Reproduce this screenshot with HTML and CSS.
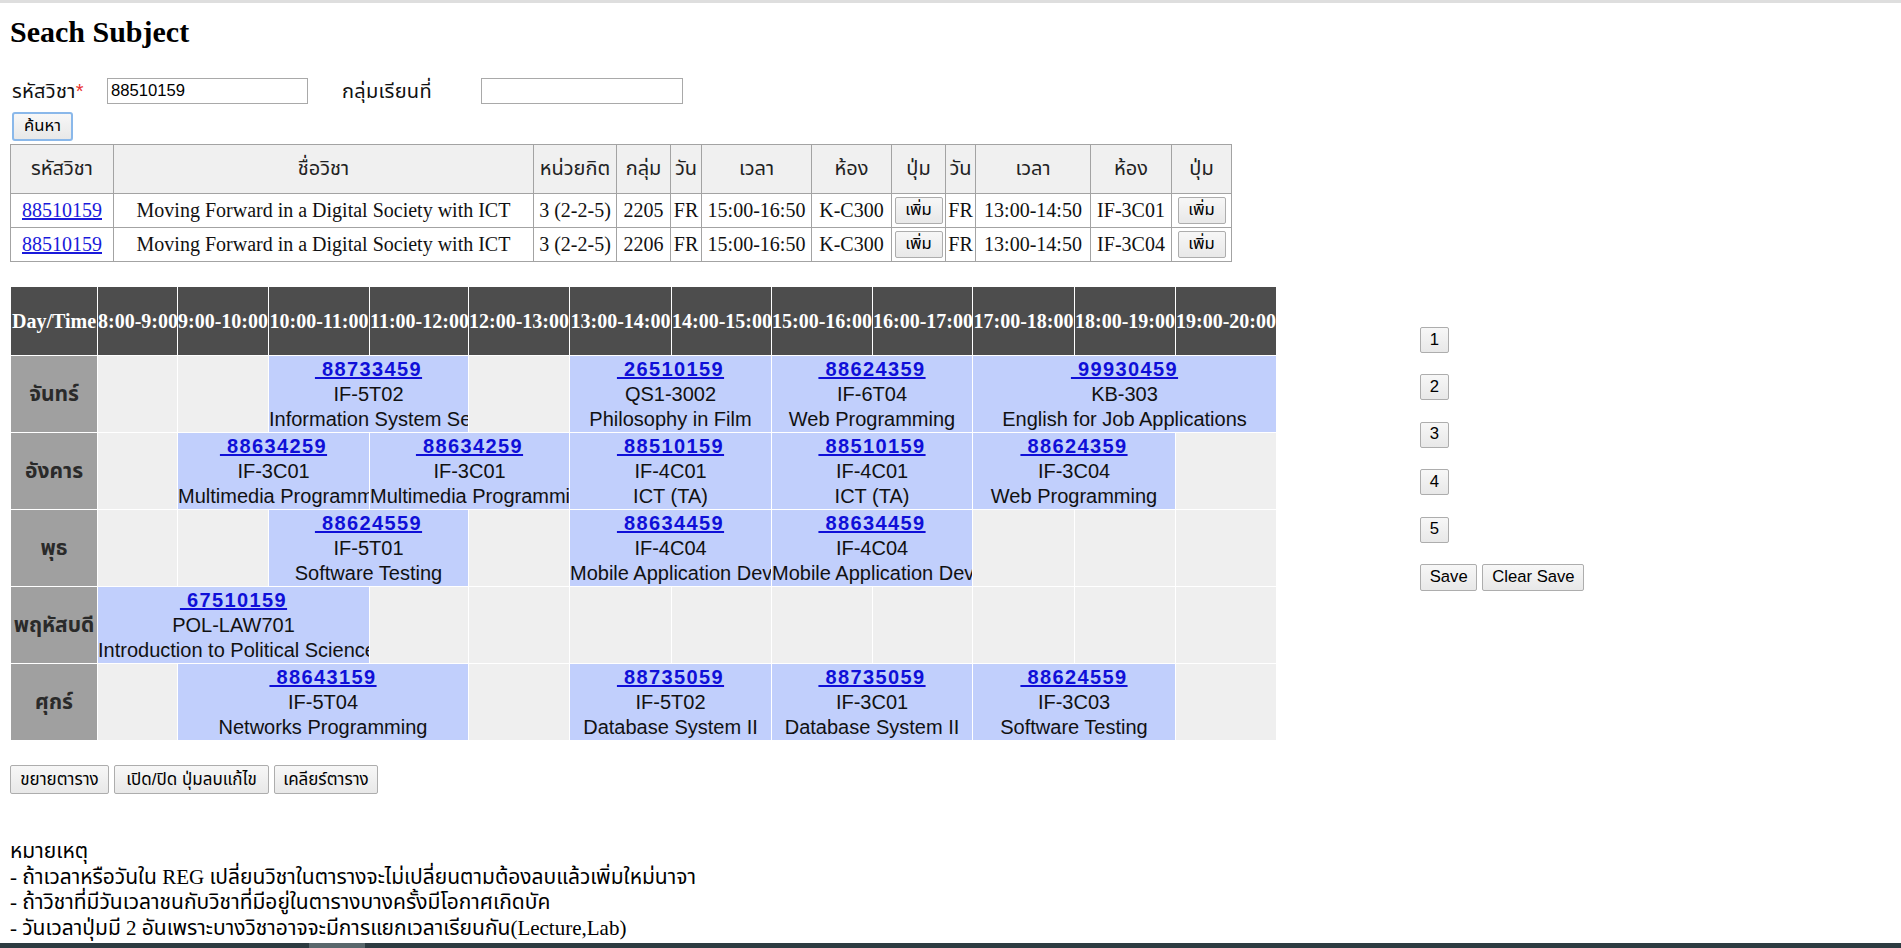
FILE: index.html
```html
<!DOCTYPE html>
<html lang="th">
<head>
<meta charset="utf-8">
<title>Seach Subject</title>
<link rel="stylesheet" href="styles.css">
</head>
<body>
<div class="topline"></div>
<main class="page">
  <h2 class="title">Seach Subject</h2>
  <form class="search">
    <div class="field-row">
      <label class="lbl lbl-code">รหัสวิชา<span class="req">*</span></label>
      <input class="txt" type="text" value="88510159">
      <label class="lbl lbl-group">กลุ่มเรียนที่</label>
      <input class="txt txt-wide" type="text" value="">
    </div>
    <div class="btn-row"><button type="button" class="btn btn-search">ค้นหา</button></div>
  </form>

  <table class="results">
    <colgroup>
      <col><col><col><col><col><col><col><col><col><col><col><col>
    </colgroup>
    <thead>
      <tr>
        <th>รหัสวิชา</th><th>ชื่อวิชา</th><th>หน่วยกิต</th><th>กลุ่ม</th><th>วัน</th><th>เวลา</th><th>ห้อง</th><th>ปุ่ม</th><th>วัน</th><th>เวลา</th><th>ห้อง</th><th>ปุ่ม</th>
      </tr>
    </thead>
    <tbody>
      <tr>
        <td><a href="#">88510159</a></td><td>Moving Forward in a Digital Society with ICT</td><td>3 (2-2-5)</td><td>2205</td><td>FR</td><td>15:00-16:50</td><td>K-C300</td><td><button type="button" class="btn add">เพิ่ม</button></td><td>FR</td><td>13:00-14:50</td><td>IF-3C01</td><td><button type="button" class="btn add">เพิ่ม</button></td>
      </tr>
      <tr>
        <td><a href="#">88510159</a></td><td>Moving Forward in a Digital Society with ICT</td><td>3 (2-2-5)</td><td>2206</td><td>FR</td><td>15:00-16:50</td><td>K-C300</td><td><button type="button" class="btn add">เพิ่ม</button></td><td>FR</td><td>13:00-14:50</td><td>IF-3C04</td><td><button type="button" class="btn add">เพิ่ม</button></td>
      </tr>
    </tbody>
  </table>

  <div class="planner">
    <table class="grid">
      <colgroup>
        <col><col><col><col><col><col><col><col><col><col><col><col><col>
      </colgroup>
      <thead>
        <tr>
          <th>Day/Time</th><th>8:00-9:00</th><th>9:00-10:00</th><th>10:00-11:00</th><th>11:00-12:00</th><th>12:00-13:00</th><th>13:00-14:00</th><th>14:00-15:00</th><th>15:00-16:00</th><th>16:00-17:00</th><th>17:00-18:00</th><th>18:00-19:00</th><th>19:00-20:00</th>
        </tr>
      </thead>
      <tbody>
        <tr>
          <td class="day">จันทร์</td>
          <td class="free"></td><td class="free"></td>
          <td class="slot" colspan="2"><div class="cell"><a href="#">&nbsp;88733459</a><span>IF-5T02</span><span>Information System Security</span></div></td>
          <td class="free"></td>
          <td class="slot" colspan="2"><div class="cell"><a href="#">&nbsp;26510159</a><span>QS1-3002</span><span>Philosophy in Film</span></div></td>
          <td class="slot" colspan="2"><div class="cell"><a href="#">&nbsp;88624359</a><span>IF-6T04</span><span>Web Programming</span></div></td>
          <td class="slot" colspan="3"><div class="cell"><a href="#">&nbsp;99930459</a><span>KB-303</span><span>English for Job Applications</span></div></td>
        </tr>
        <tr>
          <td class="day">อังคาร</td>
          <td class="free"></td>
          <td class="slot" colspan="2"><div class="cell"><a href="#">&nbsp;88634259</a><span>IF-3C01</span><span>Multimedia Programming</span></div></td>
          <td class="slot" colspan="2"><div class="cell"><a href="#">&nbsp;88634259</a><span>IF-3C01</span><span>Multimedia Programming</span></div></td>
          <td class="slot" colspan="2"><div class="cell"><a href="#">&nbsp;88510159</a><span>IF-4C01</span><span>ICT (TA)</span></div></td>
          <td class="slot" colspan="2"><div class="cell"><a href="#">&nbsp;88510159</a><span>IF-4C01</span><span>ICT (TA)</span></div></td>
          <td class="slot" colspan="2"><div class="cell"><a href="#">&nbsp;88624359</a><span>IF-3C04</span><span>Web Programming</span></div></td>
          <td class="free"></td>
        </tr>
        <tr>
          <td class="day">พุธ</td>
          <td class="free"></td><td class="free"></td>
          <td class="slot" colspan="2"><div class="cell"><a href="#">&nbsp;88624559</a><span>IF-5T01</span><span>Software Testing</span></div></td>
          <td class="free"></td>
          <td class="slot" colspan="2"><div class="cell"><a href="#">&nbsp;88634459</a><span>IF-4C04</span><span>Mobile Application Development</span></div></td>
          <td class="slot" colspan="2"><div class="cell"><a href="#">&nbsp;88634459</a><span>IF-4C04</span><span>Mobile Application Development</span></div></td>
          <td class="free"></td><td class="free"></td><td class="free"></td>
        </tr>
        <tr>
          <td class="day">พฤหัสบดี</td>
          <td class="slot" colspan="3"><div class="cell"><a href="#">&nbsp;67510159</a><span>POL-LAW701</span><span>Introduction to Political Science</span></div></td>
          <td class="free"></td><td class="free"></td><td class="free"></td><td class="free"></td><td class="free"></td><td class="free"></td><td class="free"></td><td class="free"></td><td class="free"></td>
        </tr>
        <tr>
          <td class="day">ศุกร์</td>
          <td class="free"></td>
          <td class="slot" colspan="3"><div class="cell"><a href="#">&nbsp;88643159</a><span>IF-5T04</span><span>Networks Programming</span></div></td>
          <td class="free"></td>
          <td class="slot" colspan="2"><div class="cell"><a href="#">&nbsp;88735059</a><span>IF-5T02</span><span>Database System II</span></div></td>
          <td class="slot" colspan="2"><div class="cell"><a href="#">&nbsp;88735059</a><span>IF-3C01</span><span>Database System II</span></div></td>
          <td class="slot" colspan="2"><div class="cell"><a href="#">&nbsp;88624559</a><span>IF-3C03</span><span>Software Testing</span></div></td>
          <td class="free"></td>
        </tr>
      </tbody>
    </table>

    <div class="side">
      <button type="button" class="btn num">1</button>
      <button type="button" class="btn num">2</button>
      <button type="button" class="btn num">3</button>
      <button type="button" class="btn num">4</button>
      <button type="button" class="btn num">5</button>
      <div class="save-row">
        <button type="button" class="btn">Save</button>
        <button type="button" class="btn">Clear Save</button>
      </div>
    </div>
  </div>

  <div class="tools">
    <button type="button" class="btn tool tool-expand">ขยายตาราง</button>
    <button type="button" class="btn tool tool-toggle">เปิด/ปิด ปุ่มลบแก้ไข</button>
    <button type="button" class="btn tool tool-clear">เคลียร์ตาราง</button>
  </div>

  <div class="notes">
    <p>หมายเหตุ</p>
    <p>- ถ้าเวลาหรือวันใน REG เปลี่ยนวิชาในตารางจะไม่เปลี่ยนตามต้องลบแล้วเพิ่มใหม่นาจา</p>
    <p>- ถ้าวิชาที่มีวันเวลาชนกับวิชาที่มีอยู่ในตารางบางครั้งมีโอกาศเกิดบัค</p>
    <p>- วันเวลาปุ่มมี 2 อันเพราะบางวิชาอาจจะมีการแยกเวลาเรียนกัน(Lecture,Lab)</p>
  </div>
</main>
<div class="hscroll"><div class="thumb"></div></div>
</body>
</html>
```
FILE: styles.css
```css
* { box-sizing: border-box; }

html, body {
  margin: 0;
  padding: 0;
  background: #fff;
}

body {
  font-family: "Liberation Serif", "Noto Sans Thai", "Noto Serif Thai", "Tahoma", "Loma", "Garuda", "Norasi", serif;
  font-size: 20px;
  color: #000;
}

.topline {
  height: 3px;
  background: #dedede;
}

.page {
  padding: 0 10px;
}

.title {
  margin: 12px 0 0;
  font: bold 30px/34px "Liberation Serif", serif;
}

/* ---------- search form ---------- */
.search { margin: 0; }

.field-row {
  display: flex;
  align-items: center;
  margin-top: 29px;
  height: 26px;
}

.lbl {
  font: 20px/26px "Liberation Sans", "Noto Sans Thai", "Tahoma", "Loma", "Garuda", sans-serif;
  color: #111;
  white-space: nowrap;
  letter-spacing: 0.3px;
}

.lbl-code { width: 97px; padding-left: 2px; }
.lbl-group { width: 173px; padding-left: 34px; }

.req { color: #e8312f; }

.txt {
  width: 201px;
  height: 26px;
  margin: 0;
  border: 1px solid #a9a9a9;
  padding: 1px 3px;
  font: 16.67px "Liberation Sans", sans-serif;
  color: #000;
  background: #fff;
}

.txt-wide { width: 202px; }

.btn-row { margin-top: 8px; padding-left: 2px; }

.btn {
  margin: 0;
  height: 27px;
  padding: 0 8.75px;
  border: 1px solid #adadad;
  border-radius: 2px;
  background: linear-gradient(#f7f7f7, #e8e8e8);
  font: 16.67px/1 "Liberation Sans", "Noto Sans Thai", "Tahoma", "Loma", "Garuda", sans-serif;
  color: #000;
  white-space: nowrap;
}

.btn-search {
  display: block;
  width: 61px;
  height: 29px;
  padding: 0;
  border: 2px solid #8ab8ea;
  border-radius: 3px;
}

/* ---------- results table ---------- */
.results {
  margin-top: 3px;
  width: 1221px;
  table-layout: fixed;
  border-collapse: collapse;
  border: 1px solid #555;
}

.results col:nth-child(1) { width: 103px; }
.results col:nth-child(2) { width: 420px; }
.results col:nth-child(3) { width: 83px; }
.results col:nth-child(4) { width: 54px; }
.results col:nth-child(5) { width: 31px; }
.results col:nth-child(6) { width: 110px; }
.results col:nth-child(7) { width: 80px; }
.results col:nth-child(8) { width: 54px; }
.results col:nth-child(9) { width: 30px; }
.results col:nth-child(10) { width: 115px; }
.results col:nth-child(11) { width: 81px; }
.results col:nth-child(12) { width: 60px; }

.results th,
.results td {
  border: 1px solid #a3a3a3;
  padding: 0;
  text-align: center;
  white-space: nowrap;
  overflow: hidden;
}

.results th {
  height: 49px;
  background: #f0f0f0;
  font: 20px "Liberation Sans", "Noto Sans Thai", "Tahoma", "Loma", "Garuda", sans-serif;
  color: #222;
}

.results td {
  height: 34px;
  font: 20px "Liberation Serif", serif;
  color: #111;
}

.results a { color: #1a1adb; }

.btn.add {
  width: 48px;
  height: 27px;
  padding: 0;
  vertical-align: middle;
}

/* ---------- timetable grid ---------- */
.planner {
  display: flex;
  align-items: flex-start;
  margin-top: 24px;
}

.grid {
  width: 1266px;
  flex: none;
  table-layout: fixed;
  border-collapse: collapse;
}

.grid col:nth-child(1) { width: 87px; }
.grid col:nth-child(2) { width: 80px; }
.grid col:nth-child(3) { width: 91px; }
.grid col:nth-child(4) { width: 101px; }
.grid col:nth-child(5) { width: 99px; }
.grid col:nth-child(6) { width: 101px; }
.grid col:nth-child(7) { width: 102px; }
.grid col:nth-child(8) { width: 100px; }
.grid col:nth-child(9) { width: 101px; }
.grid col:nth-child(10) { width: 100px; }
.grid col:nth-child(11) { width: 102px; }
.grid col:nth-child(12) { width: 101px; }
.grid col:nth-child(13) { width: 101px; }

.grid th,
.grid td {
  border: 1px solid #fff;
  padding: 0;
}

.grid th {
  height: 69px;
  background: #4d4d4d;
  color: #fff;
  font: bold 20px "Liberation Serif", serif;
  white-space: nowrap;
  text-align: center;
  overflow: hidden;
}

.grid td {
  height: 77px;
}

.grid .free { background: #efefef; }

.grid .day {
  background: #a0a0a0;
  color: #2a2a2a;
  text-align: center;
  font: bold 21px "Liberation Sans", "Noto Sans Thai", "Tahoma", "Loma", "Garuda", sans-serif;
  white-space: nowrap;
  overflow: hidden;
}

.grid .slot { background: #c1cffc; }

.cell {
  overflow: hidden;
  white-space: nowrap;
  text-align: center;
  font: 20px/25px "Liberation Sans", sans-serif;
  color: #111;
}

.cell a,
.cell span {
  display: block;
}

.cell a {
  color: #0f0fd8;
  font-weight: bold;
  letter-spacing: 1.4px;
}

/* ---------- side buttons ---------- */
.side {
  margin-left: 143px;
  padding-top: 41px;
  display: flex;
  flex-direction: column;
  align-items: flex-start;
  gap: 21.4px;
}

.btn.num {
  height: 26px;
}

.save-row {
  display: flex;
  gap: 5px;
}

/* ---------- tools ---------- */
.tools {
  margin-top: 24px;
  display: flex;
  gap: 5px;
}

.btn.tool {
  height: 29px;
  padding: 0;
  font-size: 17px;
}

.tool-expand { width: 99px; }
.tool-toggle { width: 155px; }
.tool-clear { width: 104px; }

/* ---------- notes ---------- */
.notes {
  margin-top: 45px;
  padding-bottom: 40px;
}

.notes p {
  margin: 0;
  font-size: 21px;
  line-height: 25.5px;
  white-space: nowrap;
}

/* bottom overlay scrollbar */
.hscroll {
  position: fixed;
  left: 0;
  right: 0;
  bottom: 0;
  height: 5px;
  background: #2d3b41;
}

.hscroll .thumb {
  position: absolute;
  left: 309px;
  top: 0;
  width: 56px;
  height: 5px;
  background: #59676c;
}
```
